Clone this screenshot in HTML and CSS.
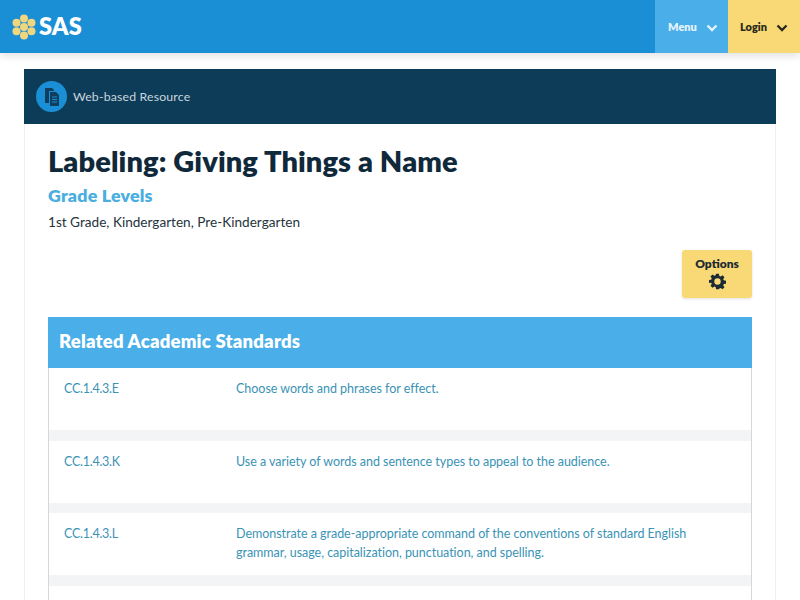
FILE: index.html
```html
<!DOCTYPE html>
<html lang="en">
<head>
<meta charset="utf-8">
<title>Labeling: Giving Things a Name</title>
<link rel="stylesheet" href="styles.css">
</head>
<body>
<header class="topbar">
  <a class="logo">
    <svg class="logo-mark" width="26" height="26" viewBox="0 0 26 26">
      <g fill="#f0d77f">
        <circle cx="13" cy="4.500" r="4"/><circle cx="13" cy="13" r="4"/><circle cx="13" cy="21.500" r="4"/>
        <circle cx="5.500" cy="8.700" r="4"/><circle cx="5.500" cy="17.300" r="4"/>
        <circle cx="20.500" cy="8.700" r="4"/><circle cx="20.500" cy="17.300" r="4"/>
      </g>
    </svg>
    <span class="logo-text">SAS</span>
  </a>
  <nav class="nav">
    <a class="nav-item nav-menu">Menu
      <svg class="chev" width="12" height="8" viewBox="0 0 12 8"><path d="M1.500 1.500 6 6l4.500-4.500" fill="none" stroke="currentColor" stroke-width="2.400"/></svg>
    </a>
    <a class="nav-item nav-login">Login
      <svg class="chev" width="12" height="8" viewBox="0 0 12 8"><path d="M1.500 1.500 6 6l4.500-4.500" fill="none" stroke="currentColor" stroke-width="2.400"/></svg>
    </a>
  </nav>
</header>
<main class="card">
  <div class="card-bar">
    <span class="res-icon">
      <svg width="18" height="20" viewBox="0 0 18 20">
        <path d="M2 1h7l2 2v1H6v12H2z" fill="#0f3f5c"/>
        <path d="M7 5h6l3 3v11H7z" fill="#0f3f5c"/>
        <path d="M9 10h5M9 12.500h5M9 15h5" stroke="#1b8fd6" stroke-width="1"/>
      </svg>
    </span>
    <span class="res-label">Web-based Resource</span>
  </div>
  <div class="card-body">
    <h1 class="title">Labeling: Giving Things a Name</h1>
    <h2 class="subtitle">Grade Levels</h2>
    <p class="grades">1st Grade, Kindergarten, Pre-Kindergarten</p>
    <div class="actions">
      <button class="options">Options
        <svg width="17" height="17" viewBox="0 0 24 24"><path fill="#1c2b33" fill-rule="evenodd" d="M10 1h4l.6 3.100 1.900.8 2.600-1.800 2.800 2.800-1.800 2.600.8 1.900 3.100.6v4l-3.100.6-.8 1.900 1.800 2.600-2.800 2.800-2.600-1.800-1.900.8L14 23h-4l-.6-3.100-1.900-.8-2.600 1.800-2.800-2.800 1.800-2.600-.8-1.900L0 14v-4l3.100-.6.8-1.900-1.800-2.600 2.800-2.800 2.600 1.800 1.900-.8zM12 7.500a4.500 4.500 0 1 0 0 9 4.500 4.500 0 0 0 0-9z"/></svg>
      </button>
    </div>
    <section class="standards">
      <h3 class="standards-head">Related Academic Standards</h3>
      <div class="row"><span class="code">CC.1.4.3.E</span><span class="desc">Choose words and phrases for effect.</span></div>
      <div class="row"><span class="code">CC.1.4.3.K</span><span class="desc">Use a variety of words and sentence types to appeal to the audience.</span></div>
      <div class="row"><span class="code">CC.1.4.3.L</span><span class="desc">Demonstrate a grade-appropriate command of the conventions of standard English grammar, usage, capitalization, punctuation, and spelling.</span></div>
      <div class="row"></div>
    </section>
  </div>
</main>
</body>
</html>
```
FILE: styles.css
```css
* { box-sizing: border-box; }
html, body { height: 600px; overflow: hidden; }
body { margin: 0; background: #fff; font-family: "Lato", "Open Sans", sans-serif; color: #1c2b33; }
.topbar { height: 53px; background: #1b8fd6; display: flex; justify-content: space-between; box-shadow: 0 3px 8px rgba(0,0,0,.12); }
.logo { display: flex; align-items: center; gap: 2px; padding-left: 11px; }
.logo-text { color: #fff; font: 800 23.500px/1 "Lato", sans-serif; letter-spacing: .2px; }
.nav { display: flex; }
.nav-item { display: flex; align-items: center; font-size: 11px; font-weight: 800; padding-left: 13px; gap: 9px; padding-bottom: 1px; }
.chev { margin-top: 3px; }
.nav-menu { width: 73px; background: #4aaee8; color: #e4f3fc; }
.nav-login { width: 72px; padding-left: 12px; background: #f9d976; color: #2a2a1c; }
.card { margin: 16px 24px 0; border: 1px solid #eef0f2; border-top: 0; }
.card-bar { height: 55px; margin: 0 -1px; background: #0d3c58; display: flex; align-items: center; padding-left: 12px; gap: 6px; }
.res-icon { width: 31px; height: 31px; border-radius: 50%; background: #1b8fd6; display: flex; align-items: center; justify-content: center; }
.res-label { color: #c9d6de; font-size: 12.300px; letter-spacing: .17px; }
.card-body { padding: 21px 23px 0; }
.title { margin: 0; font-size: 29px; line-height: 32px; font-weight: 800; color: #10293a; letter-spacing: .1px; }
.subtitle { margin: 7px 0 0; font-size: 17.800px; line-height: 22px; font-weight: 800; color: #4aaee0; letter-spacing: .2px; }
.grades { margin: 6px 0 0; font-size: 13.600px; line-height: 20px; color: #26343c; }
.actions { display: flex; justify-content: flex-end; margin-top: 18px; }
.options { width: 70px; height: 48px; padding: 7px 0 0; border: 0; border-radius: 3px; background: #f9d976; box-shadow: 0 1px 3px rgba(0,0,0,.12); color: #1c2b33; font: 800 12px/14px "Lato", sans-serif; display: flex; flex-direction: column; align-items: center; gap: 2px; }
.standards { margin-top: 19px; border-left: 1px solid #d4d8db; border-right: 1px solid #d4d8db; background: #f3f4f6; }
.standards-head { margin: 0 -1px; height: 51px; background: #4aaee8; color: #fff; font-size: 18.500px; font-weight: 800; line-height: 49px; padding-left: 11px; letter-spacing: .2px; }
.row { display: flex; min-height: 62px; margin-bottom: 10.500px; padding: 11px 15px 0; background: #fff; font-size: 12.500px; line-height: 19px; color: #3a93b5; }
.code { flex: 0 0 172px; letter-spacing: -.25px; }
.desc { flex: 1; padding-right: 30px; letter-spacing: -.03px; }
```
